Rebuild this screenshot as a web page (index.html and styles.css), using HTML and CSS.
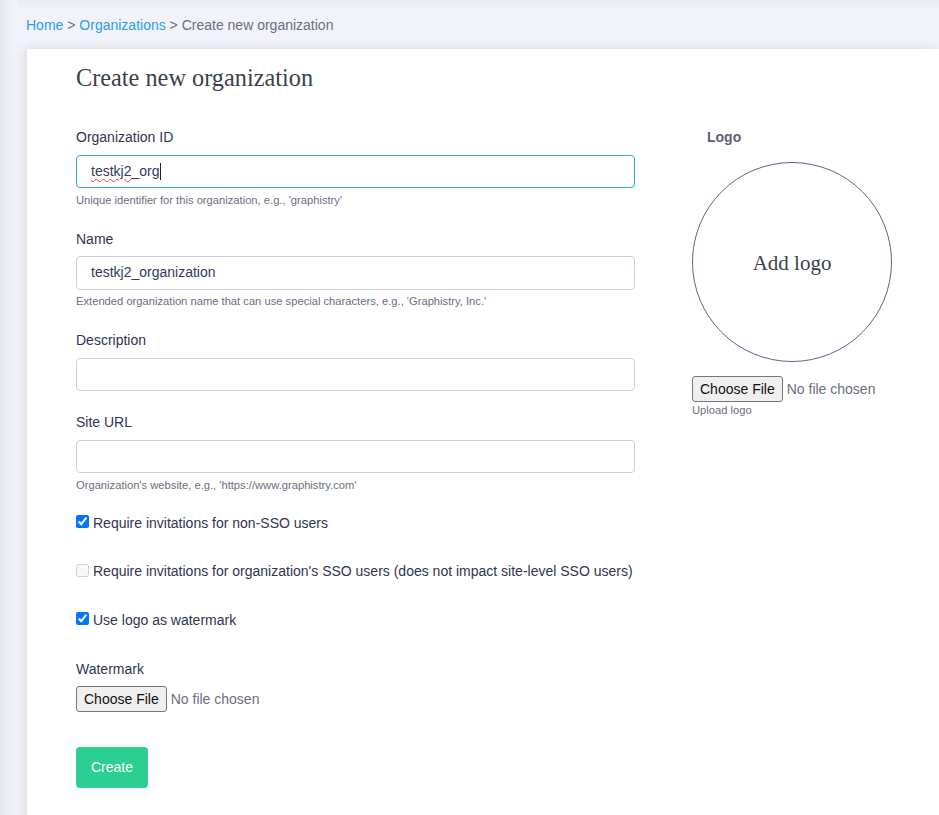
FILE: index.html
```html
<!DOCTYPE html>
<html lang="en">
<head>
<meta charset="utf-8">
<title>Create new organization</title>
<link rel="stylesheet" href="styles.css">
</head>
<body>
<div class="page">
  <nav class="breadcrumb">
    <a href="#">Home</a> &gt; <a href="#">Organizations</a> &gt; Create new organization
  </nav>
  <main class="card">
    <h1 class="title">Create new organization</h1>
    <div class="row">
      <div class="col-main">
        <div class="group">
          <label class="label">Organization ID</label>
          <div class="input focused"><span class="misspelled">testkj2</span>_org<span class="caret"></span></div>
          <div class="help">Unique identifier for this organization, e.g., 'graphistry'</div>
        </div>
        <div class="group">
          <label class="label">Name</label>
          <div class="input">testkj2_organization</div>
          <div class="help">Extended organization name that can use special characters, e.g., 'Graphistry, Inc.'</div>
        </div>
        <div class="group">
          <label class="label">Description</label>
          <div class="input"></div>
        </div>
        <div class="group group-last">
          <label class="label">Site URL</label>
          <div class="input"></div>
          <div class="help">Organization's website, e.g., 'https://www.graphistry.com'</div>
        </div>
        <label class="check-row"><input type="checkbox" checked>Require invitations for non-SSO users</label>
        <label class="check-row"><input type="checkbox" disabled>Require invitations for organization's SSO users (does not impact site-level SSO users)</label>
        <label class="check-row"><input type="checkbox" checked>Use logo as watermark</label>
        <div class="group watermark">
          <label class="label">Watermark</label>
          <input class="file" type="file">
        </div>
        <button class="btn-create" type="button">Create</button>
      </div>
      <aside class="col-side">
        <div class="side-label">Logo</div>
        <div class="logo-circle">Add logo</div>
        <input class="file" type="file">
        <div class="help side-help">Upload logo</div>
      </aside>
    </div>
  </main>
</div>
</body>
</html>
```

FILE: styles.css
```css
html, body {
  margin: 0;
  padding: 0;
}
body {
  background: #f2f3f8;
  font-family: "Liberation Sans", Arial, sans-serif;
  font-size: 14px;
  color: #2f3452;
  min-height: 815px;
}
.page {
  min-height: 815px;
  background:
    linear-gradient(to right, #e6e7ee 0, #eff0f5 10px, #f2f3f8 16px, rgba(242,243,248,0) 20px),
    linear-gradient(to bottom, #ebecf2 0, #f2f3f8 10px);
  overflow: hidden;
}
.breadcrumb {
  padding: 15px 0 14px 26px;
  line-height: 20px;
  color: #6b6e80;
}
.breadcrumb a {
  color: #2a9cf0;
  text-decoration: none;
}
.card {
  margin-left: 27px;
  background: #fff;
  min-height: 766px;
  padding: 14px 0 40px 49px;
  box-shadow: -4px 0 10px rgba(40, 45, 80, 0.08), 0 -2px 6px rgba(40, 45, 80, 0.04);
}
.title {
  margin: 0 0 34px;
  font-family: "Liberation Serif", "Times New Roman", serif;
  font-weight: normal;
  font-size: 24.3px;
  line-height: 30px;
  color: #3b3f4c;
}
.row {
  display: flex;
  align-items: flex-start;
}
.col-main {
  flex: none;
  width: 559px;
}
.col-side {
  flex: none;
  margin-left: 57px;
  display: flex;
  flex-direction: column;
  align-items: flex-start;
}
.group {
  margin-bottom: 21px;
}
.group-last {
  margin-bottom: 20px;
}
.label {
  display: block;
  line-height: 20px;
  margin-bottom: 7.5px;
  color: #2f3452;
}
.input {
  box-sizing: border-box;
  height: 33.5px;
  border: 1px solid #cdd0e3;
  border-radius: 4px;
  padding: 0 14px;
  line-height: 31.5px;
  font-size: 14px;
  color: #323862;
  white-space: nowrap;
}
.input.focused {
  border-color: #2da2f0;
}
.misspelled {
  text-decoration: underline wavy #e0433a;
  text-decoration-thickness: 1px;
  text-underline-offset: 2px;
}
.caret {
  display: inline-block;
  width: 1px;
  height: 17px;
  background: #222;
  vertical-align: -4px;
}
.help {
  margin-top: 3.5px;
  font-size: 11.2px;
  line-height: 16px;
  color: #6a6e80;
}
.check-row {
  display: flex;
  align-items: center;
  height: 20px;
  margin-bottom: 28.5px;
  color: #2f3452;
  white-space: nowrap;
}
.check-row input {
  flex: none;
  width: 13px;
  height: 13px;
  margin: 0 4px 2px 0;
}
.watermark {
  padding-top: 0.5px;
}
.file {
  font-family: "Liberation Sans", Arial, sans-serif;
  font-size: 14px;
  color: #6b6f80;
}
.file::file-selector-button {
  font-family: "Liberation Sans", Arial, sans-serif;
  font-size: 14px;
  color: #111;
  background: #efefef;
  border: 1px solid #767676;
  border-radius: 3px;
  padding: 4px 7px;
  margin-right: 4px;
}
.btn-create {
  margin-top: 14px;
  background: #2bcf91;
  color: #fff;
  border: none;
  border-radius: 4px;
  padding: 10px 15px;
  line-height: 21px;
  font-family: "Liberation Sans", Arial, sans-serif;
  font-size: 14px;
}
.side-label {
  padding-left: 15px;
  line-height: 20px;
  font-weight: bold;
  color: #5a5f72;
  margin-bottom: 15px;
}
.logo-circle {
  box-sizing: border-box;
  width: 200px;
  height: 200px;
  padding-top: 3px;
  border: 1px solid #5d6385;
  border-radius: 50%;
  display: flex;
  align-items: center;
  justify-content: center;
  font-family: "Liberation Serif", "Times New Roman", serif;
  font-size: 21px;
  color: #3b3f4c;
  margin-bottom: 14px;
}
.side-help {
  margin-top: 0;
}
```
